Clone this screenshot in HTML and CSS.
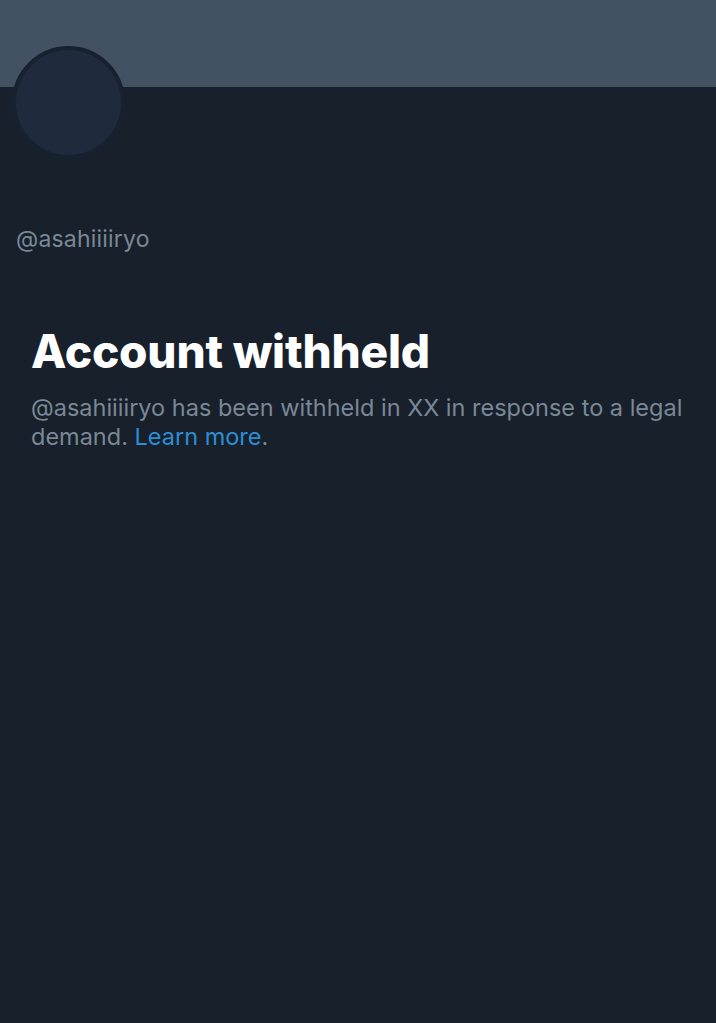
FILE: index.html
```html
<!DOCTYPE html>
<html>
<head>
<meta charset="utf-8">
<link rel="stylesheet" href="styles.css">
</head>
<body>
<div class="page">
  <div class="banner"></div>
  <div class="profile">
    <div class="avatar-row"><div class="avatar"></div></div>
    <div class="handle">@asahiiiiryo</div>
  </div>
  <div class="notice">
    <h1 class="title">Account withheld</h1>
    <p class="desc">@asahiiiiryo has been withheld in XX in response to a legal demand. <a class="link" href="#">Learn more</a>.</p>
  </div>
</div>
</body>
</html>
```
FILE: styles.css
```css
html, body {
  margin: 0;
  padding: 0;
  background: #17202b;
}
.page {
  width: 716px;
  min-height: 1023px;
  background: #17202b;
  font-family: Inter, "Noto Sans", sans-serif;
}
.banner {
  height: 87px;
  background: #435263;
}
.profile {
  padding: 0 16px;
}
.avatar-row {
  margin-top: -41px;
  height: 115px;
}
.avatar {
  width: 105px;
  height: 105px;
  border-radius: 50%;
  background: #1f2b3c;
  border: 4px solid #172230;
  margin-left: -4px;
}
.handle {
  margin-top: 64px;
  font-size: 23px;
  line-height: 28px;
  color: #7b8896;
  letter-spacing: 0.2px;
}
.notice {
  padding: 72px 31px 0 31px;
}
.title {
  margin: 0;
  font-size: 46px;
  line-height: 52px;
  font-weight: 800;
  color: #ffffff;
  letter-spacing: -0.2px;
}
.desc {
  margin: 16px 0 0 0;
  font-size: 23.5px;
  line-height: 29px;
  color: #7b8896;
  letter-spacing: 0px;
}
.link {
  color: #2b8fd6;
  text-decoration: none;
}
```
